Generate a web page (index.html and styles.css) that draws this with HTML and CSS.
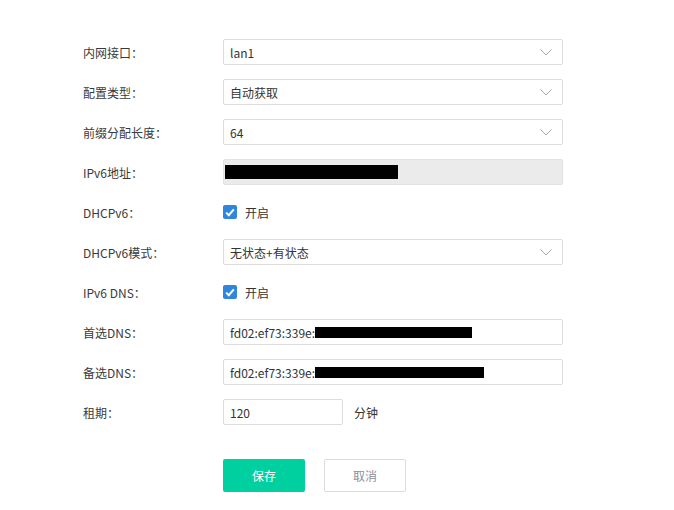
FILE: index.html
```html
<!DOCTYPE html>
<html lang="zh-CN">
<head>
    <meta charset="UTF-8">
    <title>IPv6设置</title>
    <link rel="stylesheet" href="styles.css">
</head>
<body>
    <form class="settings-form">
        <div class="form-row">
            <label class="form-label">内网接口：</label>
            <div class="select-box">
                <span>lan1</span>
                <svg class="arrow" width="12" height="7" viewBox="0 0 12 7"><path d="M0.5 0.5 L6 6 L11.5 0.5" fill="none" stroke="#aaa" stroke-width="1"/></svg>
            </div>
        </div>
        <div class="form-row">
            <label class="form-label">配置类型：</label>
            <div class="select-box">
                <span>自动获取</span>
                <svg class="arrow" width="12" height="7" viewBox="0 0 12 7"><path d="M0.5 0.5 L6 6 L11.5 0.5" fill="none" stroke="#aaa" stroke-width="1"/></svg>
            </div>
        </div>
        <div class="form-row">
            <label class="form-label">前缀分配长度：</label>
            <div class="select-box">
                <span>64</span>
                <svg class="arrow" width="12" height="7" viewBox="0 0 12 7"><path d="M0.5 0.5 L6 6 L11.5 0.5" fill="none" stroke="#aaa" stroke-width="1"/></svg>
            </div>
        </div>
        <div class="form-row">
            <label class="form-label">IPv6地址：</label>
            <div class="text-box disabled">
                <span class="redact redact-addr"></span>
            </div>
        </div>
        <div class="form-row">
            <label class="form-label">DHCPv6：</label>
            <div class="check">
                <span class="check-box">
                    <svg width="10" height="9" viewBox="0 0 10 9"><path d="M1.2 4.6 L3.8 7.2 L8.8 1.4" fill="none" stroke="#fff" stroke-width="2"/></svg>
                </span>
                <span>开启</span>
            </div>
        </div>
        <div class="form-row">
            <label class="form-label">DHCPv6模式：</label>
            <div class="select-box">
                <span>无状态+有状态</span>
                <svg class="arrow" width="12" height="7" viewBox="0 0 12 7"><path d="M0.5 0.5 L6 6 L11.5 0.5" fill="none" stroke="#aaa" stroke-width="1"/></svg>
            </div>
        </div>
        <div class="form-row">
            <label class="form-label">IPv6 DNS：</label>
            <div class="check">
                <span class="check-box">
                    <svg width="10" height="9" viewBox="0 0 10 9"><path d="M1.2 4.6 L3.8 7.2 L8.8 1.4" fill="none" stroke="#fff" stroke-width="2"/></svg>
                </span>
                <span>开启</span>
            </div>
        </div>
        <div class="form-row">
            <label class="form-label">首选DNS：</label>
            <div class="text-box">
                <span>fd02:ef73:339e:</span><span class="redact redact-dns1"></span>
            </div>
        </div>
        <div class="form-row">
            <label class="form-label">备选DNS：</label>
            <div class="text-box">
                <span>fd02:ef73:339e:</span><span class="redact redact-dns2"></span>
            </div>
        </div>
        <div class="form-row">
            <label class="form-label">租期：</label>
            <div class="text-box short">
                <span>120</span>
            </div>
            <span class="unit">分钟</span>
        </div>
        <div class="form-actions">
            <button type="button" class="btn btn-save">保存</button>
            <button type="button" class="btn btn-cancel">取消</button>
        </div>
    </form>
</body>
</html>
```

FILE: styles.css
```css
* {
    margin: 0;
    padding: 0;
    box-sizing: border-box;
}

body {
    background: #fff;
    font-family: "Noto Sans CJK SC", "Noto Sans", sans-serif;
    font-size: 12px;
    color: #333;
}

.settings-form {
    padding: 32px 0 0 83px;
}

.form-row {
    display: flex;
    align-items: center;
    height: 40px;
}

.form-label {
    width: 140px;
    color: #3a3a3a;
}

.select-box,
.text-box {
    display: flex;
    align-items: center;
    width: 340px;
    height: 26px;
    padding: 0 6px;
    border: 1px solid #dcdcdc;
    border-radius: 2px;
    background: #fff;
}

.select-box span {
    flex: 1;
}

.arrow {
    margin-right: 4px;
}

.text-box.disabled {
    background: #ebebeb;
    border-color: #e2e2e2;
    padding: 0 1px;
}

.text-box.short {
    width: 120px;
}

.unit {
    margin-left: 11px;
}

.redact {
    display: inline-block;
    background: #000;
}

.redact-addr {
    width: 173px;
    height: 14px;
}

.redact-dns1 {
    width: 157px;
    height: 11px;
}

.redact-dns2 {
    width: 169px;
    height: 11px;
}

.check {
    display: flex;
    align-items: center;
    gap: 8px;
}

.check-box {
    display: flex;
    align-items: center;
    justify-content: center;
    width: 14px;
    height: 14px;
    border-radius: 2px;
    background: #2d87de;
}

.form-actions {
    display: flex;
    gap: 19px;
    margin: 27px 0 0 140px;
}

.btn {
    width: 82px;
    height: 33px;
    border-radius: 2px;
    font-family: "Noto Sans CJK SC", "Noto Sans", sans-serif;
    font-size: 12px;
    cursor: pointer;
}

.btn-save {
    border: none;
    background: #00d0a0;
    color: #fff;
}

.btn-cancel {
    border: 1px solid #dcdcdc;
    background: #fff;
    color: #8a9099;
}
```
